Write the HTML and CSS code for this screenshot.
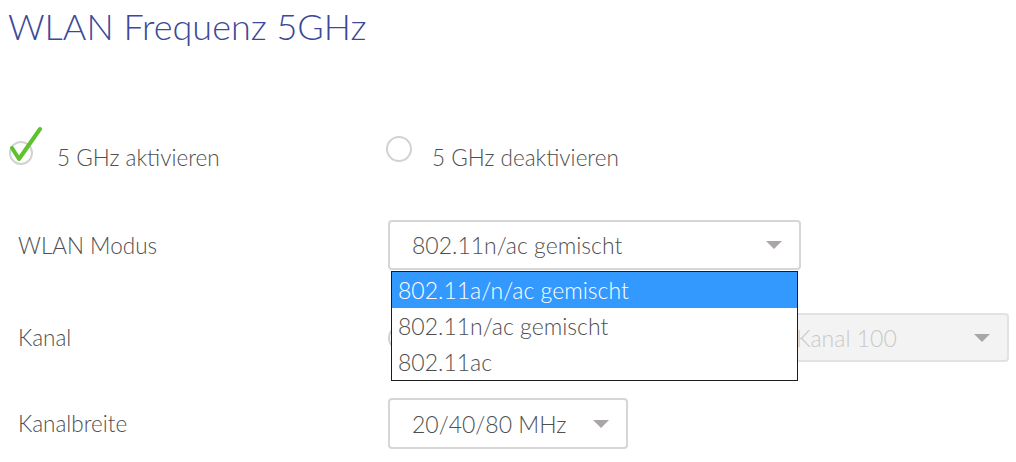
FILE: index.html
```html
<!DOCTYPE html>
<html lang="de">
<head>
    <meta charset="UTF-8">
    <meta name="viewport" content="width=device-width, initial-scale=1.0">
    <title>WLAN Frequenz 5GHz</title>
    <link rel="stylesheet" href="styles.css">
</head>
<body>
    <div class="page">
        <h1 class="title">WLAN Frequenz 5GHz</h1>

        <div class="row radio-row">
            <label class="radio-option first">
                <svg class="check-icon" width="36" height="42" viewBox="0 0 36 42">
                    <circle cx="13" cy="27" r="11" fill="none" stroke="#d2d2d2" stroke-width="2"/>
                    <path d="M4 22 L11 33 L32 3" fill="none" stroke="#5ec22c" stroke-width="4" stroke-linecap="round" stroke-linejoin="round"/>
                </svg>
                <span class="option-text">5 GHz aktivieren</span>
            </label>
            <label class="radio-option">
                <span class="radio"></span>
                <span class="option-text">5 GHz deaktivieren</span>
            </label>
        </div>

        <div class="row field-row mode-row">
            <div class="field-label">WLAN Modus</div>
            <div class="select-wrap">
                <div class="select wide">
                    <span>802.11n/ac gemischt</span>
                    <span class="arrow"></span>
                </div>
                <ul class="dropdown">
                    <li class="active">802.11a/n/ac gemischt</li>
                    <li>802.11n/ac gemischt</li>
                    <li>802.11ac</li>
                </ul>
            </div>
        </div>

        <div class="row field-row channel-row">
            <div class="field-label">Kanal</div>
            <div class="channel-controls">
                <span class="radio"></span>
                <div class="select disabled">
                    <span>Kanal 100</span>
                    <span class="arrow"></span>
                </div>
            </div>
        </div>

        <div class="row field-row width-row">
            <div class="field-label">Kanalbreite</div>
            <div class="select narrow">
                <span>20/40/80 MHz</span>
                <span class="arrow"></span>
            </div>
        </div>
    </div>
</body>
</html>
```

FILE: styles.css
```css
body {
    margin: 0;
    font-family: Lato, "Open Sans", sans-serif;
    font-weight: 300;
    background: #ffffff;
    color: #555555;
    overflow: hidden;
}

.page {
    padding: 0 0 0 8px;
}

.title {
    margin: 0;
    padding-top: 2px;
    font-size: 36px;
    line-height: 48px;
    font-weight: 300;
    color: #3b4a98;
}

.row {
    display: flex;
    align-items: center;
}

.radio-row {
    margin-top: 78px;
    height: 42px;
}

.radio-option {
    display: flex;
    align-items: center;
    font-size: 22.5px;
    color: #4f4f4f;
}

.option-text {
    margin-top: 16px;
}

.radio-option.first {
    width: 378px;
}

.check-icon {
    margin-top: -4px;
    margin-right: 13px;
}

.radio {
    display: inline-block;
    width: 22px;
    height: 22px;
    border: 2px solid #d2d2d2;
    border-radius: 50%;
    margin-right: 20px;
}

.field-row {
    padding-left: 10px;
}

.field-label {
    width: 370px;
    font-size: 22.5px;
    color: #4f4f4f;
}

.mode-row {
    margin-top: 50px;
}

.channel-row {
    margin-top: 43px;
}

.width-row {
    margin-top: 36px;
}

.select-wrap {
    position: relative;
}

.select {
    display: flex;
    align-items: center;
    justify-content: space-between;
    box-sizing: border-box;
    height: 50px;
    padding: 0 17px 0 22px;
    border: 2px solid #d6d6d6;
    border-radius: 4px;
    font-size: 23px;
    color: #4f4f4f;
    background: #ffffff;
}

.select.wide {
    width: 413px;
}

.select.narrow {
    width: 240px;
    height: 51px;
}

.arrow {
    width: 0;
    height: 0;
    border-left: 8px solid transparent;
    border-right: 8px solid transparent;
    border-top: 8px solid #aaa5a9;
}

.channel-controls {
    display: flex;
    align-items: center;
}

.channel-controls .radio {
    margin-right: 0;
}

.select.disabled {
    margin-left: 358px;
    width: 237px;
    height: 49px;
    background: #f3f3f3;
    border-color: #e2e2e2;
    color: #c9c9c9;
}

.dropdown {
    position: absolute;
    top: 51px;
    left: 3px;
    width: 407px;
    box-sizing: border-box;
    margin: 0;
    padding: 0;
    list-style: none;
    border: 1px solid #1c1c1c;
    background: #ffffff;
    z-index: 2;
}

.dropdown li {
    height: 36px;
    line-height: 36px;
    padding-left: 6px;
    font-size: 23px;
    color: #4f4f4f;
}

.dropdown li.active {
    background: #3399ff;
    color: #ffffff;
}
```
